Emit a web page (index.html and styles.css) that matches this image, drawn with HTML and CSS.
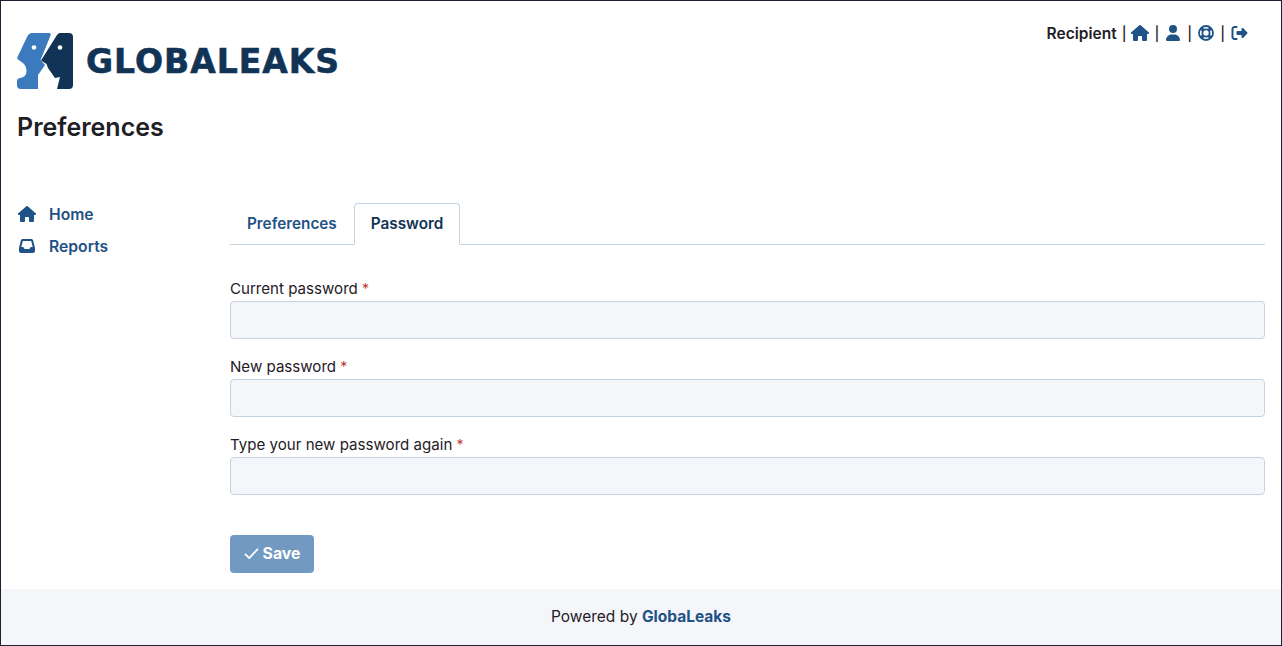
FILE: index.html
```html
<!DOCTYPE html>
<html lang="en">
<head>
<meta charset="utf-8">
<title>Preferences</title>
<link rel="stylesheet" href="styles.css">
</head>
<body>
<div class="page">
  <header class="header">
    <div class="brand">
      <svg class="logo-mark" viewBox="0 0 56 56" aria-hidden="true">
        <path class="blue" d="M15 0H32Q34.500 0 33.500 2.500L26 21 23.500 27 28 32 21 42 21 56H4Q0 56 0 52V48Q0 45.500 3 45 9.500 44 9.500 38 9.500 33.500 6.500 30.500L.5 26Q0 25 .5 24L10 4Q12 0 15 0Z"/>
        <circle class="white" cx="17" cy="14.500" r="2.300"/>
        <path class="navy" d="M43 0H52Q56 0 56 4V52Q56 56 52 56H40L43 44 38 45 31 35 29.500 31 24 27.500 40 2Q41.500 0 43 0Z"/>
        <circle class="white" cx="43" cy="14.500" r="2.300"/>
      </svg>
      <span class="logo-text">GLOBALEAKS</span>
    </div>
    <nav class="user-nav">
      <strong class="role">Recipient</strong>
      <span class="sep">|</span>
      <svg class="nav-icon home-i" viewBox="0 0 576 512"><path d="M575.800 255.500c0 18-15 32.100-32 32.100h-32l.7 160.200c0 2.700-.2 5.400-.5 8.100V472c0 22.100-17.900 40-40 40H456c-1.100 0-2.200 0-3.300-.1c-1.400 .1-2.800 .1-4.200 .1H416 392c-22.100 0-40-17.900-40-40V448 384c0-17.700-14.300-32-32-32H256c-17.700 0-32 14.300-32 32v64 24c0 22.100-17.900 40-40 40H160 128.100c-1.500 0-3-.1-4.500-.2c-1.200 .1-2.400 .2-3.600 .2H104c-22.100 0-40-17.900-40-40V360c0-.9 0-1.900 .1-2.800V287.600H32c-18 0-32-14-32-32.100c0-9 3-17 10-24L266.400 8c7-7 15-8 22-8s15 2 21 7L564.800 231.500c8 7 12 15 11 24z"/></svg>
      <span class="sep">|</span>
      <svg class="nav-icon user-i" viewBox="0 0 448 512"><path d="M224 256A128 128 0 1 0 224 0a128 128 0 1 0 0 256zm-45.700 48C79.800 304 0 383.800 0 482.300C0 498.700 13.300 512 29.700 512H418.300c16.400 0 29.700-13.300 29.700-29.700C448 383.800 368.200 304 269.700 304H178.300z"/></svg>
      <span class="sep">|</span>
      <svg class="nav-icon ring-i" viewBox="0 0 16 16"><circle class="ring" cx="8" cy="8" r="7"/><circle class="ring" cx="8" cy="8" r="3.600"/><path class="spokes" d="M2.800 2.800L5.400 5.400M13.200 2.800L10.600 5.400M2.800 13.200L5.400 10.600M13.200 13.200L10.600 10.600"/></svg>
      <span class="sep">|</span>
      <svg class="nav-icon out-i" viewBox="0 0 512 512"><path d="M377.900 105.900L500.700 228.700c7.200 7.200 11.300 17.100 11.300 27.300s-4.100 20.100-11.300 27.300L377.900 406.100c-6.400 6.400-15 9.900-24 9.900c-18.700 0-33.900-15.200-33.900-33.900l0-62.100-128 0c-17.700 0-32-14.300-32-32l0-64c0-17.700 14.300-32 32-32l128 0 0-62.100c0-18.700 15.200-33.900 33.900-33.900c9 0 17.600 3.500 24 9.900zM160 96L96 96c-17.700 0-32 14.300-32 32l0 256c0 17.700 14.300 32 32 32l64 0c17.700 0 32 14.300 32 32s-14.300 32-32 32l-64 0c-53 0-96-43-96-96L0 128C0 75 43 32 96 32l64 0c17.700 0 32 14.300 32 32s-14.300 32-32 32z"/></svg>
    </nav>
  </header>

  <h1 class="title">Preferences</h1>

  <main class="main">
    <aside class="sidebar">
      <a class="side-link" href="#">
        <svg class="side-icon" viewBox="0 0 576 512"><path d="M575.800 255.500c0 18-15 32.100-32 32.100h-32l.7 160.200c0 2.700-.2 5.400-.5 8.100V472c0 22.100-17.900 40-40 40H456c-1.100 0-2.200 0-3.300-.1c-1.400 .1-2.800 .1-4.200 .1H416 392c-22.100 0-40-17.900-40-40V448 384c0-17.700-14.300-32-32-32H256c-17.700 0-32 14.300-32 32v64 24c0 22.100-17.900 40-40 40H160 128.100c-1.500 0-3-.1-4.500-.2c-1.200 .1-2.400 .2-3.600 .2H104c-22.100 0-40-17.900-40-40V360c0-.9 0-1.900 .1-2.800V287.600H32c-18 0-32-14-32-32.100c0-9 3-17 10-24L266.400 8c7-7 15-8 22-8s15 2 21 7L564.800 231.500c8 7 12 15 11 24z"/></svg>
        Home
      </a>
      <a class="side-link" href="#">
        <svg class="side-icon" viewBox="0 0 512 512"><path d="M121 32C91.600 32 66 52 58.900 80.500L1.900 308.400C.6 313.500 0 318.700 0 323.900V416c0 35.300 28.700 64 64 64H448c35.300 0 64-28.700 64-64V323.900c0-5.200-.6-10.400-1.900-15.500l-57-227.900C446 52 420.400 32 391 32H121zm0 64H391l48 192H387.800c-12.100 0-23.200 6.800-28.600 17.700l-14.300 28.600c-5.400 10.800-16.500 17.700-28.600 17.700H195.800c-12.100 0-23.200-6.800-28.600-17.700l-14.300-28.600c-5.400-10.800-16.500-17.700-28.600-17.700H73L121 96z"/></svg>
        Reports
      </a>
    </aside>

    <section class="content">
      <div class="tabs">
        <a class="tab" href="#">Preferences</a>
        <a class="tab active" href="#">Password</a>
      </div>
      <form class="form">
        <div class="field">
          <label class="label">Current password <span class="req">*</span></label>
          <input class="input" type="password">
        </div>
        <div class="field">
          <label class="label">New password <span class="req">*</span></label>
          <input class="input" type="password">
        </div>
        <div class="field">
          <label class="label">Type your new password again <span class="req">*</span></label>
          <input class="input" type="password">
        </div>
        <button class="save" type="button">
          <svg class="check" viewBox="0 0 16 12"><path d="M1 6.500L5.500 11 15 1"/></svg>
          Save
        </button>
      </form>
    </section>
  </main>

  <footer class="footer">Powered by&nbsp;<a class="foot-link" href="#">GlobaLeaks</a></footer>
</div>
</body>
</html>
```

FILE: styles.css
```css
* { box-sizing: border-box; }
html, body { margin: 0; height: 100%; }
body {
  font-family: Inter, "Open Sans", sans-serif;
  font-size: 15.1px;
  color: #1f2026;
  background: #fff;
}
.page {
  height: 646px;
  border: 1px solid #1c2133;
  display: flex;
  flex-direction: column;
  overflow: hidden;
}
.header {
  display: flex;
  justify-content: space-between;
  align-items: flex-start;
  padding: 22px 32px 0 16px;
}
.brand {
  display: flex;
  align-items: center;
  gap: 13px;
  margin-top: 10px;
}
.logo-mark { width: 56px; height: 56px; display: block; }
.blue { fill: #3a7abd; }
.navy { fill: #113355; }
.white { fill: #fff; }
.logo-text {
  font-family: "DejaVu Sans", Inter, sans-serif;
  font-size: 33px;
  font-weight: 700;
  color: #113355;
  line-height: 54px;
  padding-top: 2px;
  letter-spacing: 1px;
  -webkit-text-stroke: 0.6px #113355;
}
.user-nav {
  display: flex;
  align-items: center;
  height: 20px;
  color: #1f2026;
  font-size: 15.5px;
}
.role { font-weight: 600; }
.sep { margin: 0 5px; font-size: 14px; font-weight: 500; color: #1f2026; }
.nav-icon { fill: #1f5285; display: block; height: 16px; }
.home-i { width: 18px; }
.user-i { width: 16px; margin: 0 1px; }
.ring-i { width: 16px; margin: 0 1px; }
.out-i { width: 17px; margin: 0 1px; }
.ring { fill: none; stroke: #1f5285; stroke-width: 1.8; }
.spokes { stroke: #1f5285; stroke-width: 3.2; fill: none; }
.title {
  margin: 22px 0 0 16px;
  font-size: 25px;
  line-height: 32px;
  font-weight: 600;
  color: #1f2026;
}
.main {
  flex: 1;
  display: flex;
  padding: 55px 16px 0;
}
.sidebar {
  width: 213px;
  flex: none;
  display: flex;
  flex-direction: column;
}
.side-link {
  display: flex;
  align-items: center;
  height: 32px;
  font-weight: 600;
  color: #1f5285;
  text-decoration: none;
  font-size: 15.7px;
}
.side-icon { width: 18px; height: 16px; fill: #1f5285; margin: 0 13px 0 1px; }
.content { flex: 1; min-width: 0; padding-top: 5px; }
.tabs {
  display: flex;
  height: 42px;
  border-bottom: 1px solid #c5d2e2;
}
.tab {
  height: 42px;
  padding: 0 16px 2px;
  display: flex;
  align-items: center;
  font-weight: 600;
  font-size: 15.3px;
  color: #1f5285;
  text-decoration: none;
  border: 1px solid transparent;
  border-radius: 4px 4px 0 0;
}
.tab.active {
  color: #113355;
  background: #fff;
  border-color: #c5d2e2 #c5d2e2 #fff;
}
.form {
  padding-top: 32px;
  display: flex;
  flex-direction: column;
  align-items: stretch;
}
.field { margin-bottom: 16px; }
.label { display: block; line-height: 24px; height: 24px; }
.req { color: #c0392b; font-size: 14px; }
.input {
  display: block;
  width: 100%;
  height: 38px;
  background: #f5f6fa;
  border: 1px solid #c5d2e2;
  border-radius: 4px;
}
.save {
  align-self: flex-start;
  margin-top: 24px;
  width: 84px;
  height: 38px;
  padding: 0 0 2px;
  display: flex;
  align-items: center;
  justify-content: center;
  gap: 4px;
  background: #7199c2;
  color: #fff;
  border: 0;
  border-radius: 4px;
  font: 700 15.8px Inter, sans-serif;
}
.check { width: 15px; height: 11px; fill: none; stroke: #fff; stroke-width: 2; }
.footer {
  height: 56px;
  flex: none;
  padding-bottom: 2px;
  background: #f5f6fa;
  display: flex;
  align-items: center;
  justify-content: center;
  font-size: 15.5px;
}
.foot-link { color: #1f5285; font-weight: 700; text-decoration: none; }
```
